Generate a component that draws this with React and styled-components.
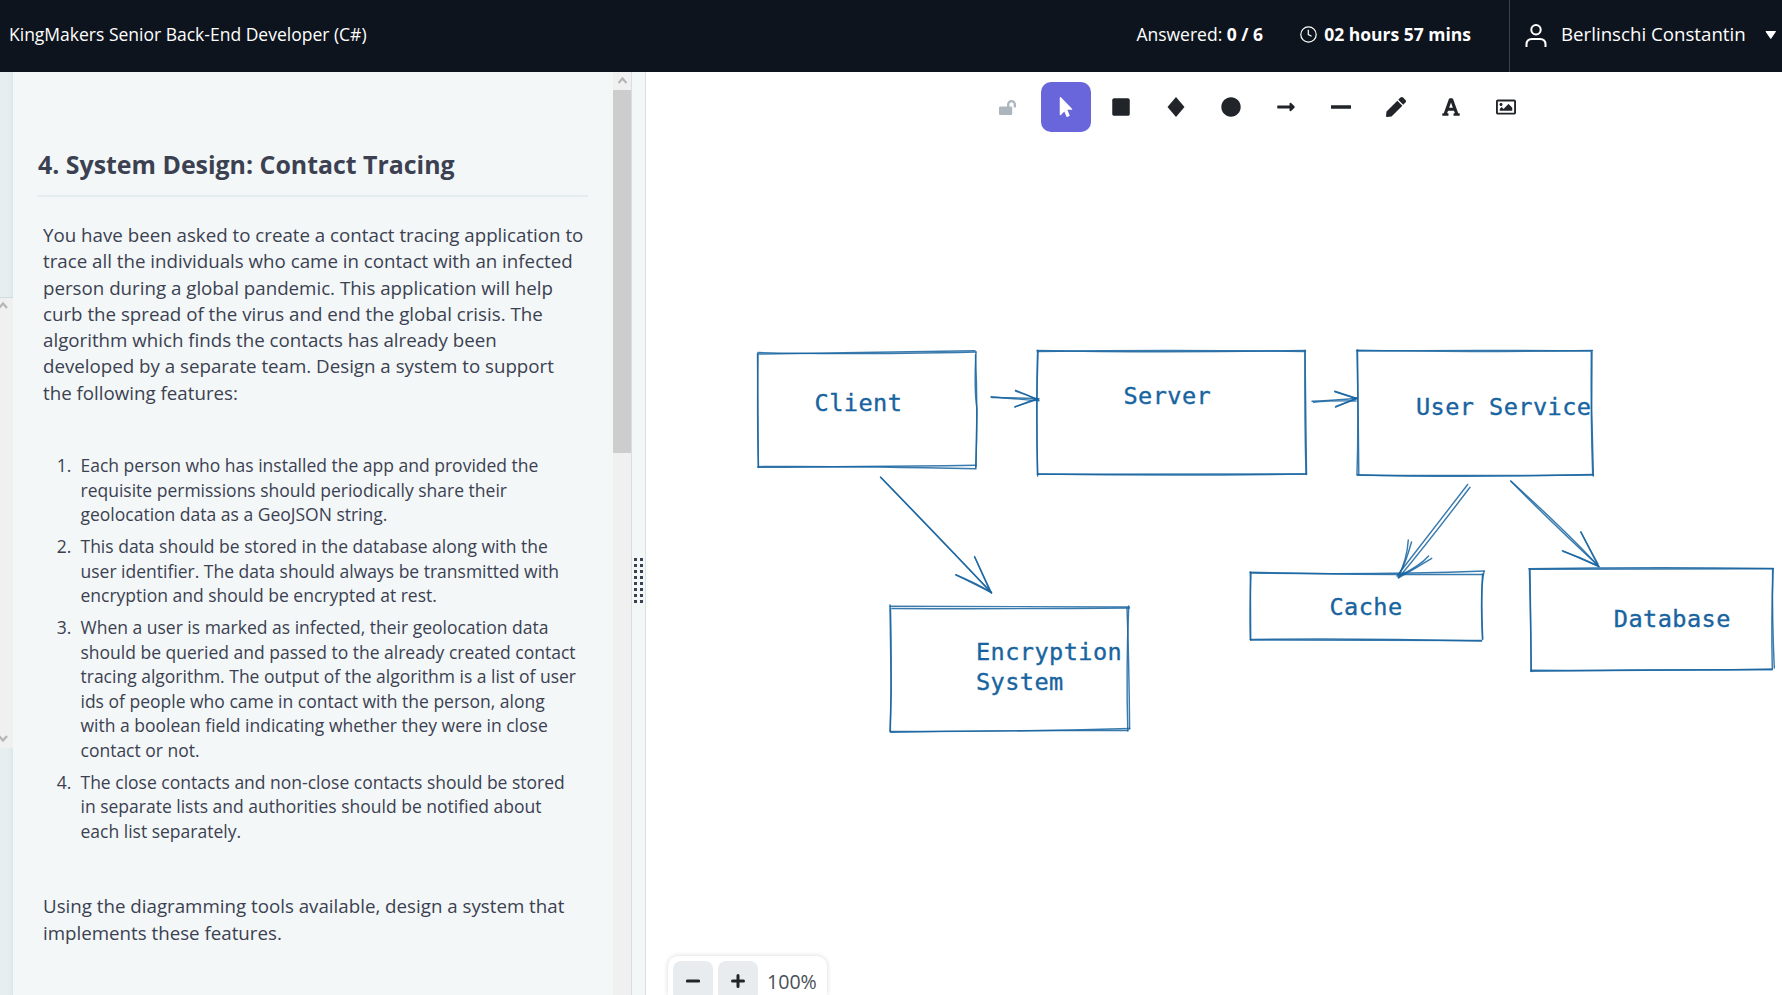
import React from "react";
import styled, { createGlobalStyle } from "styled-components";
import {
  FaMousePointer,
  FaSquare,
  FaCircle,
  FaLongArrowAltRight,
  FaPen,
  FaFont,
  FaRegImage,
  FaLockOpen,
} from "react-icons/fa";

const ink = "#1864a0";

const GlobalStyle = createGlobalStyle`
  * { box-sizing: border-box; }
  body {
    margin: 0;
    overflow: hidden;
    font-family: "Open Sans", sans-serif;
    color: #3b4151;
    background: #fff;
  }
`;

const Page = styled.div`
  display: flex;
  flex-direction: column;
  width: 1782px;
  height: 995px;
  overflow: hidden;
`;

const Header = styled.header`
  flex: none;
  display: flex;
  height: 72px;
  background: #0e141e;
  color: #fff;
  font-size: 17.5px;
  line-height: 24px;
  white-space: nowrap;
`;

const TestName = styled.div`
  margin-right: auto;
  padding: 22px 0 0 9px;
`;

const Status = styled.div`
  display: flex;
  align-items: flex-start;
  padding: 22px 38px 0 0;
  gap: 37px;
`;

const Timer = styled.div`
  display: flex;
  gap: 7px;

  svg {
    margin-top: 4px;
  }
`;

const UserMenu = styled.div`
  display: flex;
  align-items: flex-start;
  width: 273px;
  padding: 22px 0 0 15px;
  border-left: 1px solid #39424e;
  font-size: 18.7px;
`;

const UserName = styled.span`
  width: 204px;
  margin-left: 14px;
`;

const Caret = styled.svg`
  margin-top: 8px;
`;

const Body = styled.main`
  flex: 1;
  display: flex;
  min-height: 0;
`;

const Gutter = styled.aside`
  flex: none;
  display: flex;
  flex-direction: column;
  width: 13px;
  background: linear-gradient(to right, #e6eef0 8px, #dee7e8);
`;

const GutterTop = styled.div`
  height: 226px;
  border-bottom: 1px solid #cfdddd;
`;

const GutterScroll = styled.div`
  display: flex;
  flex-direction: column;
  justify-content: space-between;
  height: 450px;
  padding: 3px 0 4px;
  background: #f0f0f0;
`;

const Question = styled.section`
  flex: none;
  width: 600px;
  padding: 75px 25px 0;
  background: #f3f7f8;
`;

const Title = styled.h1`
  margin: 0 0 25px;
  height: 50px;
  font-size: 24.9px;
  line-height: 34px;
  font-weight: 700;
  border-bottom: 2px solid #e4eced;
`;

const Paragraph = styled.p`
  margin: ${(p) => p.$top || 0}px 0 0 5px;
  font-size: 18.73px;
  line-height: 26.25px;
  white-space: nowrap;
`;

const Features = styled.ol`
  margin: 47.5px 0 0;
  padding: 0 0 0 42.5px;
  font-size: 17.5px;
  line-height: 24.5px;
  white-space: nowrap;
`;

const Feature = styled.li`
  &:not(:last-child) {
    margin-bottom: 7.5px;
  }
  &::marker {
    content: counter(list-item) ".\\00a0\\00a0";
  }
`;

const Scrollbar = styled.div`
  flex: none;
  display: flex;
  flex-direction: column;
  align-items: center;
  width: 18px;
  background: #f0f0f0;
`;

const ScrollButton = styled.div`
  display: flex;
  align-items: center;
  justify-content: center;
  height: 18px;
`;

const ScrollThumb = styled.div`
  width: 18px;
  height: 363px;
  background: #cdcdcd;
`;

const Resizer = styled.div`
  flex: none;
  display: flex;
  width: 15px;
  padding: 486px 0 0 2px;
  border: solid #d5e0e0;
  border-width: 0 1px;
  background: #f3f7f8;
`;

const Grip = styled.div`
  display: grid;
  grid-template-columns: 3px 3px;
  grid-auto-rows: 3px;
  gap: 3px;
  height: max-content;
`;

const GripDot = styled.i`
  background: #39424e;
`;

const Canvas = styled.section`
  position: relative;
  flex: 1;
  display: flex;
  flex-direction: column;
  justify-content: space-between;
  background: #fff;
`;

const Toolbar = styled.div`
  display: flex;
  align-items: center;
  gap: 5px;
  padding: 10px 0 0 353px;
  color: #212529;
`;

const Lock = styled.div`
  display: flex;
  width: 37px;
  color: #adb5bd;
`;

const Tool = styled.div`
  display: flex;
  align-items: center;
  justify-content: center;
  width: 50px;
  height: 50px;
  border-radius: 10px;
  color: ${(p) => (p.$active ? "#fff" : "inherit")};
  background: ${(p) => (p.$active ? "#6965db" : "transparent")};
`;

const Drawing = styled.svg`
  position: absolute;
  left: 0;
  top: 0;
  fill: none;
  stroke: ${ink};
  stroke-width: 1.45;
  stroke-linecap: round;
  stroke-opacity: 0.85;
`;

const Label = styled.div`
  position: absolute;
  left: ${(p) => p.$x - 646}px;
  top: ${(p) => p.$y - 72 - 23}px;
  color: ${ink};
  font-family: "DejaVu Sans Mono", monospace;
  font-size: 23.6px;
  line-height: 30.3px;
  letter-spacing: 0.42px;
  white-space: pre;
  -webkit-text-stroke: 0.35px ${ink};
`;

const ZoomBar = styled.div`
  display: flex;
  gap: 5px;
  width: 159px;
  height: 39px;
  margin-left: 22px;
  padding: 5px 5px 0;
  border-radius: 10px 10px 0 0;
  box-shadow: 0 0 5px rgba(0, 0, 0, 0.16);
`;

const ZoomButton = styled.div`
  display: flex;
  justify-content: center;
  width: 40px;
  height: 40px;
  padding-top: 13px;
  border-radius: 8px;
  background: #e9ecef;
`;

const ZoomValue = styled.div`
  margin: 7px 0 0 4px;
  font-size: 19.6px;
  line-height: 27px;
  color: #495057;
`;

const Chevron = ({ down, width = 9, offset = 0 }) => (
  <svg width={width} height="10" viewBox={`${offset} 0 ${width} 10`} fill="none" stroke="#b5b5b5" strokeWidth="2.2">
    <path d={down ? "M.5 2L4.5 6.5 8.5 2" : "M.5 7L4.5 2.5 8.5 7"} />
  </svg>
);

const strokes = [
  // Client
  "M758 352.5Q840 355 976 352", "M759 354Q850 353 975 350.8",
  "M976 352Q974 390 977 409L976 467", "M975.5 355Q978 410 975.7 468",
  "M758 467.3Q850 467 976 465.3", "M758 466.6Q850 466 976 468.8",
  "M757.5 353.5L758.3 467.5", "M758 354Q757 420 758.5 466",
  // Server
  "M1037 350.5Q1160 353 1305.5 350.5", "M1037.5 351.5Q1170 349.5 1305 351.5",
  "M1305 350.5L1306.5 474.5", "M1305 352Q1304.5 420 1306 474",
  "M1037.5 474Q1170 476 1306.5 474", "M1037.5 474.3L1306 474",
  "M1037.6 350.5Q1036 400 1037.7 476", "M1038 352Q1036 410 1037.5 474",
  // User Service
  "M1356.5 350.3Q1460 352.5 1592.5 350.5", "M1357.5 351Q1480 349.8 1592 351",
  "M1592 352L1591.7 410L1593.4 476", "M1591.3 352Q1590.7 420 1592.7 475",
  "M1357.3 474.8Q1460 478 1592 474.5", "M1358 475.3Q1470 476 1593 475",
  "M1357.5 350L1358.8 474", "M1357 351Q1358.7 420 1357 475",
  // Encryption System
  "M890 606.2L1129 607", "M892 608.5Q1010 609 1129.5 608",
  "M1127 608Q1129 660 1129.6 729", "M1128.7 606Q1126 670 1127.8 731",
  "M890.3 731.5Q1010 732 1129.7 728.5", "M891 732.2Q1010 730 1128 730.5",
  "M890 605L891.2 690L890.3 732", "M890.5 608Q892 680 890 731",
  // Cache
  "M1250 572.2Q1360 575 1483 574.5", "M1250.5 573Q1380 575 1484.5 571",
  "M1484 571.5Q1480 590 1482.5 639.5", "M1482.5 574Q1481 600 1482.7 639",
  "M1250.3 639.5Q1350 638 1481.5 641", "M1251 640L1481.5 640.5",
  "M1250.3 572L1250.7 640", "M1251 573Q1249.5 610 1250.3 639.5",
  // Database
  "M1528.8 568.8Q1650 567 1773 568.5", "M1530 569.3Q1650 569 1773.3 568.8",
  "M1773.2 568.5Q1771 620 1772.3 669", "M1772.6 570Q1772 620 1774.3 668",
  "M1531 670.2Q1660 671 1772.5 669", "M1531 671.2Q1650 669.5 1772 669.8",
  "M1530 569L1531.3 671.5", "M1529.4 569.5Q1531 630 1531 671",
  // Client to Server
  "M991 396.7Q1010 398.5 1039 400.7", "M991.5 397.5L1037 398.5",
  "M1015.6 390.3L1038.5 399.8", "M1015.5 391Q1026 394 1037 399.5",
  "M1015 407Q1027 402 1038 398.5", "M1015 406.8L1039 398.8",
  // Server to User Service
  "M1312 401.3Q1336 400.5 1356.5 398.3", "M1313.5 402.3Q1330 400.5 1356 401",
  "M1334.7 391.3L1357 398.5", "M1335 391.8L1356 398.5",
  "M1335.5 407.2L1357 398", "M1335.8 406.5L1356.5 398.8",
  // Client to Encryption System
  "M880.5 477L991 592", "M880.8 477.5Q940 538 991.5 593",
  "M974.5 556.5L991.5 593", "M974.8 557.2L989.5 590",
  "M955.7 574.7L990.5 592", "M956 575Q976 583 991.5 592.7",
  // User Service to Cache
  "M1467.7 484.5L1397 576", "M1470 487.3Q1430 540 1398.5 578",
  "M1408.3 540Q1407 560 1398 577", "M1411.5 542Q1406 562 1400 573",
  "M1428.6 556Q1420 566 1399 576", "M1431.7 558.3Q1416 568 1399 577.5",
  // User Service to Database
  "M1510.7 481Q1550 521 1598 565.5", "M1511 481.3Q1568 533 1599 566.8",
  "M1580.7 532L1598.5 566.5", "M1581 532Q1592 553 1598 564",
  "M1562.3 550.7L1599 566.5", "M1563 551.2Q1580 557 1597 565.5",
];

const labels = [
  { x: 814.6, y: 411, text: "Client" },
  { x: 1123.4, y: 404, text: "Server" },
  { x: 1416, y: 415, text: "User Service" },
  { x: 976, y: 660, text: "Encryption\nSystem" },
  { x: 1329.5, y: 615, text: "Cache" },
  { x: 1613.8, y: 627, text: "Database" },
];

const tools = [
  <FaMousePointer size={20} />,
  <FaSquare size={20} />,
  <svg width="20" height="20" viewBox="0 0 20 20" fill="currentColor"><path d="M10 0l8.5 10L10 20 1.5 10z" /></svg>,
  <FaCircle size={20} />,
  <FaLongArrowAltRight size={20} />,
  <svg width="20" height="20" viewBox="0 0 20 20" fill="currentColor"><rect y="8.2" width="20" height="3.6" rx=".4" /></svg>,
  <FaPen size={20} />,
  <FaFont size={20} />,
  <FaRegImage size={20} />,
];

export default function App() {
  return (
    <Page>
      <GlobalStyle />
      <Header>
        <TestName>KingMakers Senior Back-End Developer (C#)</TestName>
        <Status>
          <div>Answered: <b>0 / 6</b></div>
          <Timer>
            <svg width="17" height="17" viewBox="0 0 17 17" fill="none" stroke="#fff" strokeWidth="1.2">
              <circle cx="8.5" cy="8.5" r="7.7" />
              <path d="M8.3 3.8v4.8l3.3 1.7" />
            </svg>
            <b>02 hours 57 mins</b>
          </Timer>
        </Status>
        <UserMenu>
          <svg width="22" height="26" viewBox="0 0 22 26" fill="none" stroke="#fff" strokeWidth="2">
            <circle cx="11" cy="7.7" r="4.7" />
            <path d="M1.5 25v-2.5Q1.5 17 7 17h8q5.500 0 5.500 5.500V25" />
          </svg>
          <UserName>Berlinschi Constantin</UserName>
          <Caret width="12" height="10" viewBox="0 0 12 10" fill="#fff" stroke="#fff" strokeLinejoin="round">
            <path d="M1 1.500h9.500L5.750 8.500z" />
          </Caret>
        </UserMenu>
      </Header>
      <Body>
        <Gutter>
          <GutterTop />
          <GutterScroll>
            <Chevron width={8} offset={1.5} />
            <Chevron down width={8} offset={1.5} />
          </GutterScroll>
        </Gutter>
        <Question>
          <Title>4. System Design: Contact Tracing</Title>
          <Paragraph>
            You have been asked to create a contact tracing application to<br />
            trace all the individuals who came in contact with an infected<br />
            person during a global pandemic. This application will help<br />
            curb the spread of the virus and end the global crisis. The<br />
            algorithm which finds the contacts has already been<br />
            developed by a separate team. Design a system to support<br />
            the following features:
          </Paragraph>
          <Features>
            <Feature>
              Each person who has installed the app and provided the<br />
              requisite permissions should periodically share their<br />
              geolocation data as a GeoJSON string.
            </Feature>
            <Feature>
              This data should be stored in the database along with the<br />
              user identifier. The data should always be transmitted with<br />
              encryption and should be encrypted at rest.
            </Feature>
            <Feature>
              When a user is marked as infected, their geolocation data<br />
              should be queried and passed to the already created contact<br />
              tracing algorithm. The output of the algorithm is a list of user<br />
              ids of people who came in contact with the person, along<br />
              with a boolean field indicating whether they were in close<br />
              contact or not.
            </Feature>
            <Feature>
              The close contacts and non-close contacts should be stored<br />
              in separate lists and authorities should be notified about<br />
              each list separately.
            </Feature>
          </Features>
          <Paragraph $top={50}>
            Using the diagramming tools available, design a system that<br />
            implements these features.
          </Paragraph>
        </Question>
        <Scrollbar>
          <ScrollButton><Chevron /></ScrollButton>
          <ScrollThumb />
        </Scrollbar>
        <Resizer>
          <Grip>
            {Array.from({ length: 16 }, (_, i) => <GripDot key={i} />)}
          </Grip>
        </Resizer>
        <Canvas>
          <Toolbar>
            <Lock><FaLockOpen size={17} /></Lock>
            {tools.map((icon, i) => (
              <Tool key={i} $active={i === 0}>{icon}</Tool>
            ))}
          </Toolbar>
          <Drawing width="1136" height="923" viewBox="646 72 1136 923">
            {strokes.map((d) => <path key={d} d={d} />)}
          </Drawing>
          {labels.map((l) => (
            <Label key={l.text} $x={l.x} $y={l.y}>{l.text}</Label>
          ))}
          <ZoomBar>
            <ZoomButton>
              <svg width="14" height="14" viewBox="0 0 14 14" stroke="#212529" strokeWidth="3.200" strokeLinecap="round">
                <path d="M1.500 7h11" />
              </svg>
            </ZoomButton>
            <ZoomButton>
              <svg width="14" height="14" viewBox="0 0 14 14" stroke="#212529" strokeWidth="3" strokeLinecap="round">
                <path d="M1.500 7h11M7 1.500v11" />
              </svg>
            </ZoomButton>
            <ZoomValue>100%</ZoomValue>
          </ZoomBar>
        </Canvas>
      </Body>
    </Page>
  );
}
